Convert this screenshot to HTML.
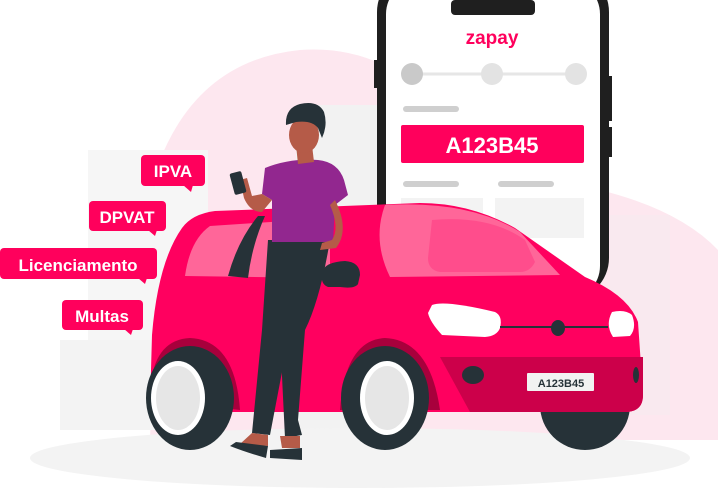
<!DOCTYPE html>
<html><head><style>
html,body{margin:0;padding:0;background:#fff;width:718px;height:493px;overflow:hidden;font-family:"Liberation Sans",sans-serif}
</style></head><body>
<svg width="718" height="493" viewBox="0 0 718 493" xmlns="http://www.w3.org/2000/svg">
<!-- background blob -->
<path d="M160,160 Q200,60 300,50 Q370,45 420,90 L600,190 Q680,210 718,250 L718,440 L150,440 Z" fill="#fde7ef"/>
<!-- buildings -->
<rect x="88" y="150" width="120" height="280" fill="#f6f6f6"/>
<rect x="296" y="105" width="90" height="330" fill="#f2f2f2"/>
<rect x="610" y="215" width="60" height="200" fill="#f9e9ef"/>
<rect x="60" y="340" width="90" height="90" fill="#f3f3f3"/>
<!-- ground -->
<ellipse cx="360" cy="458" rx="330" ry="30" fill="#f3f3f3"/>
<!-- phone -->
<rect x="377" y="-30" width="232" height="330" rx="42" fill="#1f1f1f"/>
<rect x="374" y="60" width="6" height="28" fill="#1f1f1f"/>
<rect x="606" y="76" width="6" height="45" fill="#1f1f1f"/>
<rect x="606" y="127" width="6" height="30" fill="#1f1f1f"/>
<rect x="386" y="-20" width="214" height="320" rx="34" fill="#fff"/>
<rect x="451" y="0" width="84" height="15" rx="4" fill="#1f1f1f"/>
<text x="492" y="44" text-anchor="middle" font-family="Liberation Sans,sans-serif" font-weight="bold" font-size="19" fill="#ff005c">zapay</text>
<line x1="412" y1="74" x2="576" y2="74" stroke="#e6e6e6" stroke-width="3"/>
<circle cx="412" cy="74" r="11" fill="#c9c9c9"/>
<circle cx="492" cy="74" r="11" fill="#e3e3e3"/>
<circle cx="576" cy="74" r="11" fill="#e3e3e3"/>
<rect x="403" y="106" width="56" height="6" rx="3" fill="#cfcfcf"/>
<rect x="401" y="125" width="183" height="38" rx="2" fill="#ff005c"/>
<text x="492" y="153" text-anchor="middle" font-weight="bold" font-size="22" fill="#fff">A123B45</text>
<rect x="403" y="181" width="56" height="6" rx="3" fill="#cfcfcf"/>
<rect x="498" y="181" width="56" height="6" rx="3" fill="#cfcfcf"/>
<rect x="401" y="198" width="82" height="40" fill="#f3f3f3"/>
<rect x="495" y="198" width="89" height="40" fill="#f3f3f3"/>
<!-- labels -->
<g fill="#ff005c">
<rect x="141" y="155" width="64" height="31" rx="4"/><path d="M183,185 l8,7 l2,-7z"/>
<rect x="89" y="201" width="77" height="30" rx="4"/><path d="M148,230 l7,6 l2,-6z"/>
<rect x="0" y="248" width="157" height="31" rx="4"/><path d="M138,278 l7,6 l2,-6z"/>
<rect x="62" y="300" width="81" height="30" rx="4"/><path d="M124,329 l7,6 l2,-6z"/>
</g>
<g fill="#fff" font-weight="bold" font-size="17" text-anchor="middle">
<text x="173" y="177">IPVA</text>
<text x="127" y="223">DPVAT</text>
<text x="78" y="271">Licenciamento</text>
<text x="102" y="322">Multas</text>
</g>
<!-- car far wheel -->
<ellipse cx="585" cy="405" rx="45" ry="45" fill="#263238"/>
<!-- car body -->
<path d="M150,405 L152,335 Q158,262 182,228 Q192,214 215,211 L420,203 Q470,203 515,228 L585,277 Q628,295 638,322 L643,395 Q643,412 625,412 L165,412 Z" fill="#ff005f"/>
<path d="M440,357 L643,357 L643,395 Q643,412 625,412 L470,412 Z" fill="#cc004a"/>
<path d="M185,276 Q190,240 210,226 L330,218 L330,278 Z" fill="#ff6699"/>
<path d="M385,205 Q470,200 520,232 L560,275 L390,277 Q372,240 385,205 Z" fill="#ff6699"/>
<path d="M432,220 Q490,215 525,240 L535,262 Q530,272 520,272 L440,272 Q428,270 428,258 Z" fill="#ff4d8c"/>
<!-- wheel arches -->
<path d="M150,400 Q150,340 190,338 Q235,340 240,410 Z" fill="#a8003c"/>
<path d="M340,410 Q345,340 385,338 Q430,340 440,410 Z" fill="#a8003c"/>
<!-- wheels -->
<ellipse cx="190" cy="398" rx="44" ry="52" fill="#263238"/>
<ellipse cx="178" cy="398" rx="27" ry="37" fill="#fff"/>
<ellipse cx="178" cy="398" rx="22" ry="32" fill="#e6e6e6"/>
<ellipse cx="385" cy="398" rx="44" ry="52" fill="#263238"/>
<ellipse cx="387" cy="398" rx="27" ry="37" fill="#fff"/>
<ellipse cx="387" cy="398" rx="22" ry="32" fill="#e6e6e6"/>
<!-- lights -->
<path d="M432,305 Q445,300 495,312 Q503,316 500,328 Q497,336 485,337 L442,335 Q430,322 428,313 Z" fill="#fff"/>
<path d="M612,312 Q625,309 632,315 Q637,328 630,336 L613,337 Q605,325 612,312 Z" fill="#fff"/>
<line x1="500" y1="327" x2="608" y2="327" stroke="#263238" stroke-width="2"/>
<ellipse cx="558" cy="328" rx="7" ry="8" fill="#263238"/>
<ellipse cx="473" cy="375" rx="11" ry="9" fill="#263238"/>
<ellipse cx="636" cy="375" rx="3" ry="8" fill="#263238"/>
<rect x="527" y="373" width="67" height="18" rx="1" fill="#f2f2f2"/>
<text x="561" y="387" text-anchor="middle" font-weight="bold" font-size="11" fill="#263238">A123B45</text>
<!-- mirror -->
<path d="M322,272 Q325,262 345,261 Q360,262 360,275 L358,284 Q355,289 340,287 L328,287 Q320,284 322,272 Z" fill="#263238"/>
<!-- door pillar -->
<path d="M228,276 Q238,240 258,216 L265,216 Q252,245 248,278 Z" fill="#263238"/>
<!-- person -->
<g>
<path d="M290,240 L330,240 Q320,300 305,330 L298,420 L302,435 L285,438 L280,335 Z" fill="#263238"/>
<path d="M268,240 L300,240 L290,330 L270,435 L252,433 L262,330 Z" fill="#263238"/>
<path d="M252,433 L268,435 L268,446 L240,444 Z" fill="#b55b48"/>
<path d="M236,442 L268,446 L266,458 Q245,452 230,446 Z" fill="#263238"/>
<path d="M280,436 L300,436 L300,448 L282,448 Z" fill="#b55b48"/>
<path d="M270,450 L302,448 L302,460 L270,458 Z" fill="#263238"/>
<path d="M265,168 Q290,158 318,160 Q338,162 344,180 L348,195 L335,205 L333,242 L272,242 L272,200 L262,194 Z" fill="#92278f"/>
<path d="M335,200 Q350,230 336,248 L320,250 L322,243 L332,240 Q340,228 330,205 Z" fill="#b55b48"/>
<path d="M262,194 L272,200 L262,212 Q250,212 244,198 L240,180 L247,178 L252,196 Z" fill="#b55b48"/>
<rect x="232" y="172" width="12" height="22" rx="2" transform="rotate(-15 238 183)" fill="#263238"/>
<path d="M296,145 L312,145 L314,162 L298,164 Z" fill="#b55b48"/>
<ellipse cx="304" cy="135" rx="15" ry="18" fill="#b55b48"/>
<path d="M286,125 Q285,108 300,104 Q318,100 324,112 Q328,125 322,138 L318,128 Q312,120 296,122 Z" fill="#263238"/>
</g>
</svg>
</body></html>
